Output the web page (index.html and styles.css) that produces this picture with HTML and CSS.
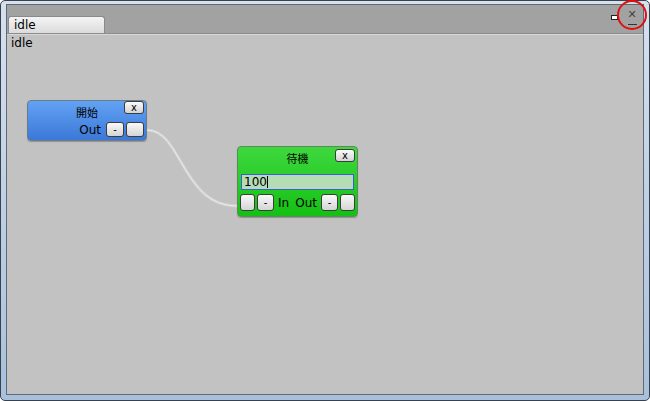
FILE: index.html
```html
<!DOCTYPE html>
<html lang="en">
<head>
    <meta charset="UTF-8">
    <title>State Machine Editor</title>
    <link rel="stylesheet" href="styles.css">
</head>
<body>
    <div class="window">
        <div class="frame">
            <div class="tabstrip">
                <div class="tab">idle</div>
                <div class="win-buttons">
                    <span class="maximize"></span>
                    <span class="close">&#x2715;</span>
                </div>
            </div>
            <div class="canvas">
                <div class="state-label">idle</div>

                <svg class="links" width="636" height="361">
                    <path class="link-glow" d="M 140 95 C 175 95, 175 171, 230 171" />
                    <path class="link" d="M 140 95 C 175 95, 175 171, 230 171" />
                </svg>

                <!-- start node -->
                <div class="node node-start" style="left: 20px; top: 65px;">
                    <div class="node-head">
                        <span class="node-title">開始</span>
                        <button class="btn btn-close">x</button>
                    </div>
                    <div class="node-row row-right">
                        <span class="port-label">Out</span>
                        <button class="btn btn-port">-</button>
                        <button class="btn btn-port"></button>
                    </div>
                </div>

                <!-- wait node -->
                <div class="node node-wait" style="left: 230px; top: 111px;">
                    <div class="node-head">
                        <span class="node-title">待機</span>
                        <button class="btn btn-close">x</button>
                    </div>
                    <div class="node-field">100</div>
                    <div class="node-row">
                        <button class="btn btn-port"></button>
                        <button class="btn btn-port">-</button>
                        <span class="port-label">In</span>
                        <span class="port-label">Out</span>
                        <button class="btn btn-port">-</button>
                        <button class="btn btn-port"></button>
                    </div>
                </div>
            </div>
        </div>
    </div>
</body>
</html>
```

FILE: styles.css
```css
body {
    margin: 0;
    background-color: #ffffff;
    font-family: "DejaVu Sans", Verdana, sans-serif;
    font-size: 12px;
    color: #000;
}
.window {
    width: 650px;
    height: 401px;
    box-sizing: border-box;
    border: 1px solid #38424e;
    border-radius: 5px;
    background: linear-gradient(#d6e1ee, #a9c0db);
    padding: 3px 5px 5px 5px;
}
.frame {
    height: 100%;
    box-sizing: border-box;
    border: 1px solid #5f6a76;
    display: flex;
    flex-direction: column;
    background-color: #c2c2c2;
}
.tabstrip {
    height: 28px;
    background-color: #a2a2a2;
    display: flex;
    align-items: flex-end;
    justify-content: space-between;
    padding-left: 1px;
    border-bottom: 1px solid #8c8c8c;
    position: relative;
}
.tab {
    width: 90px;
    height: 16px;
    padding-left: 5px;
    line-height: 16px;
    font-size: 12px;
    background: linear-gradient(#f4f4f4, #dcdcdc);
    border: 1px solid #8a8a8a;
    border-bottom: none;
    border-radius: 3px 3px 0 0;
}
.win-buttons {
    align-self: stretch;
    display: flex;
    align-items: center;
    gap: 4px;
    padding-right: 2px;
    position: relative;
    top: -4px;
}
.maximize {
    width: 5px;
    height: 3px;
    border: 1px solid #222;
    border-right-width: 2px;
    background: #fff;
    margin-top: 5px;
}
.close {
    width: 18px;
    height: 18px;
    line-height: 18px;
    text-align: center;
    font-size: 11px;
    color: #444;
    position: relative;
}
.close::before {
    content: "";
    position: absolute;
    left: -6px;
    top: -6px;
    width: 26px;
    height: 26px;
    border: 2px solid #e01010;
    border-radius: 50%;
}
.close::after {
    content: "";
    position: absolute;
    left: 5px;
    top: 18px;
    width: 9px;
    height: 1px;
    background: #333;
}
.canvas {
    flex: 1;
    position: relative;
    border-top: 1px solid #d8d8d8;
}
.state-label {
    padding: 1px 0 0 4px;
    font-size: 12px;
}
.links {
    position: absolute;
    left: 0;
    top: 0;
}
.link {
    fill: none;
    stroke: #ececec;
    stroke-width: 1;
}
.link-glow {
    fill: none;
    stroke: rgba(255, 255, 255, 0.25);
    stroke-width: 3;
}
.node {
    position: absolute;
    width: 120px;
    box-sizing: border-box;
    border: 1px solid #6c7a8a;
    border-radius: 4px;
    padding: 1px 2px 2px 2px;
    box-shadow: 0 1px 1px rgba(0, 0, 0, 0.25);
}
.node-start {
    height: 41px;
    background: linear-gradient(#62a2f4, #3b78d7);
}
.node-wait {
    height: 71px;
    width: 121px;
    background: linear-gradient(#3ed83e, #14c014);
    border-color: #5c8a5c;
}
.node-head {
    height: 17px;
    display: flex;
    justify-content: center;
    align-items: center;
    position: relative;
}
.node-wait .node-head {
    height: 26px;
}
.node-title {
    font-family: "Noto Sans CJK TC", "Noto Sans CJK JP", sans-serif;
    font-size: 11px;
    margin-top: 3px;
}
.node-wait .node-title {
    margin-top: -7px;
}
.btn {
    box-sizing: border-box;
    height: 14px;
    border: 1px solid #3c3c3c;
    border-radius: 3px;
    background: linear-gradient(#fafafa, #d4d4d4);
    font-family: "DejaVu Sans", sans-serif;
    font-size: 10px;
    line-height: 11px;
    padding: 0;
    color: #000;
}
.btn-close {
    position: absolute;
    right: 0;
    top: -1px;
    width: 20px;
    height: 13px;
}
.node-wait .btn-close {
    top: 1px;
}
.node-row {
    display: flex;
    align-items: center;
    gap: 2px;
    margin-top: 4px;
}
.row-right {
    justify-content: flex-end;
    margin-top: 3px;
}
.btn-port {
    width: 18px;
    height: 15px;
}
.node-wait .btn-port {
    width: 16px;
    height: 17px;
}
.node-wait .btn-port:nth-child(2),
.node-wait .btn-port:nth-child(5) {
    width: 18px;
}
.port-label {
    font-size: 12px;
    padding: 0 3px 0 1px;
}
.node-wait .port-label {
    padding: 0 2px;
}
.node-field {
    box-sizing: border-box;
    height: 16px;
    margin: 0 1px;
    border: 1px solid #3a5ed8;
    background-color: #b6dcb6;
    font-size: 12px;
    line-height: 14px;
    padding-left: 2px;
}
.node-field::after {
    content: "";
    display: inline-block;
    width: 1px;
    height: 12px;
    background: #000;
    vertical-align: -2px;
}
```
